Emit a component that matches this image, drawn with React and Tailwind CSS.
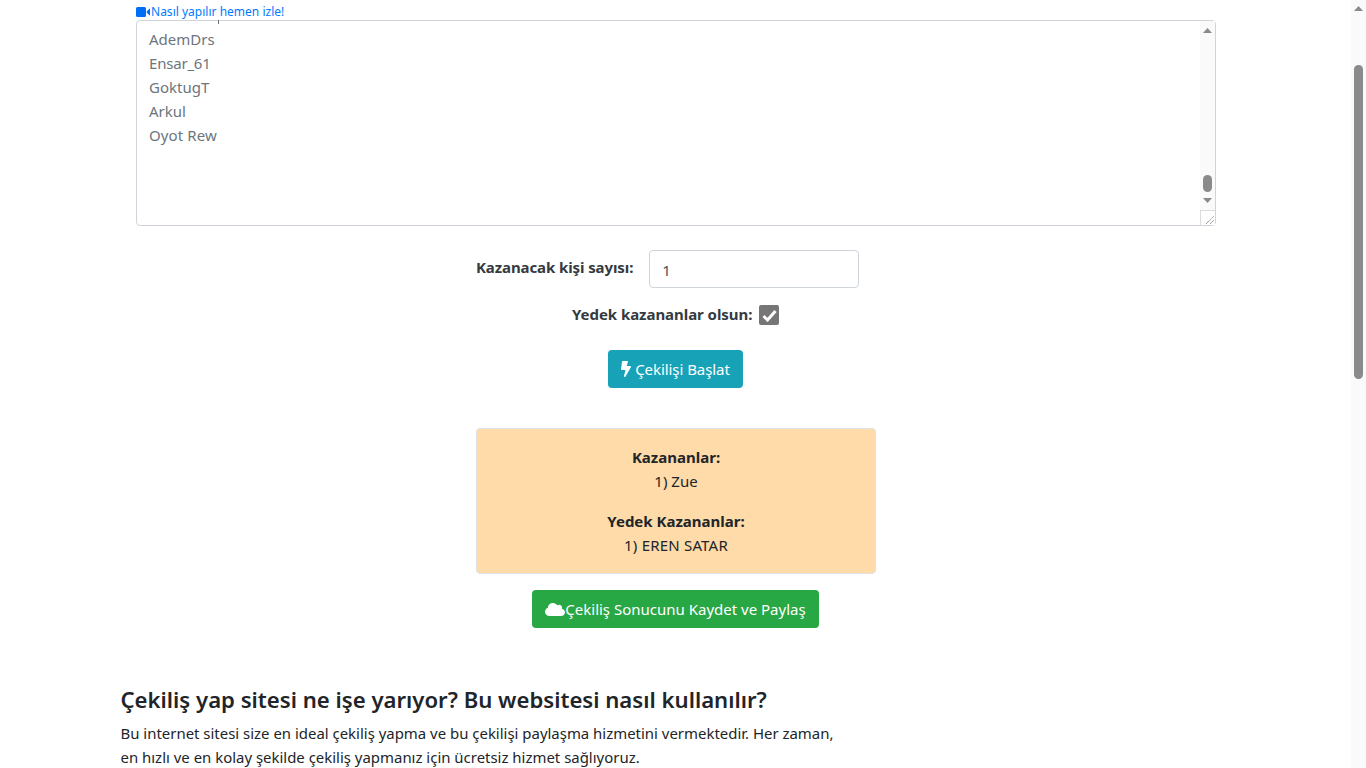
import React from "react";

function Arrow({ up, className }) {
  return (
    <svg width="9" height="5" viewBox="0 0 9 5" className={className}>
      <path d={up ? "M4.5 0L9 5H0z" : "M0 0h9L4.5 5z"} fill="#8a8a8a" />
    </svg>
  );
}

function Video() {
  return (
    <svg width="14" height="10" viewBox="0 0 14 10" className="shrink-0">
      <rect x="0" y="0" width="10" height="10" rx="1.500" fill="#006ef5" />
      <path d="M10.800 4.200L14 1.200V8.800L10.800 5.800z" fill="#006ef5" />
    </svg>
  );
}

function Bolt() {
  return (
    <svg width="10" height="16" viewBox="0 0 320 512" className="shrink-0">
      <path fill="#fff" d="M296 160H180.600l42.600-129.800C227.200 15 215.700 0 200 0H56C44 0 33.800 8.900 32.200 20.800l-32 240C-1.700 275.200 9.500 288 24 288h118.700L96.600 482.500c-3.600 15.200 8 29.500 23.300 29.500 8.400 0 16.400-4.400 20.800-12l176-304c9.300-15.900-2.200-36-20.700-36z" />
    </svg>
  );
}

function Cloud() {
  return (
    <svg width="20" height="15" viewBox="0 0 640 512" className="shrink-0" preserveAspectRatio="none">
      <path fill="#fff" d="M537.600 226.600c4.100-10.700 6.400-22.400 6.400-34.600 0-53-43-96-96-96-19.700 0-38.100 6-53.300 16.200C367 64.200 315.300 32 256 32c-88.400 0-160 71.600-160 160 0 2.700.1 5.400.2 8.100C40.200 219.800 0 273.200 0 336c0 79.500 64.500 144 144 144h368c70.700 0 128-57.300 128-128 0-61.900-44-113.600-102.400-125.400z" />
    </svg>
  );
}

export default function App() {
  return (
    <div className="flex h-screen overflow-hidden bg-white font-['Noto_Sans','Open_Sans',sans-serif] text-[15px] leading-6 text-[#212529]">
      <main className="min-w-0 flex-1 overflow-hidden">
        <div className="ml-[136px] w-[1080px] pt-[4px]">
          <a className="flex h-[16px] items-center gap-px pb-[1px] text-[12px] leading-[15px] text-[#007bff]">
            <Video />
            <span className="tracking-[0.01px]">Nasıl yapılır hemen izle!</span>
          </a>
          <div className="relative flex h-[206px] rounded-[4px] border border-[#ced4da]">
            <span className="absolute left-[81px] top-[-1px] h-[4px] w-px bg-[#6c757d]" />
            <div className="flex-1 pl-[12px] pt-[6px] text-[#6c757d]">
              <div>AdemDrs</div>
              <div className="tracking-[-0.2px]">Ensar_61</div>
              <div>GoktugT</div>
              <div>Arkul</div>
              <div className="tracking-[0.1px]">Oyot Rew</div>
            </div>
            <div className="flex w-[15px] flex-col items-center bg-[#fafafa]">
              <Arrow up className="mt-[7px]" />
              <div className="mt-[142px] h-[17px] w-[9px] rounded-full bg-[#8a8a8a]" />
              <Arrow className="mt-[6px]" />
              <div className="relative mt-auto h-[15px] w-[15px] border-l border-t border-[#dcdcdc] bg-white">
                <svg width="8" height="8" viewBox="0 0 8 8" className="absolute bottom-[1px] right-[1px]">
                  <path d="M0 8L8 0M4 8L8 4" stroke="#555" strokeWidth="0.8" strokeDasharray="1 0.6" />
                </svg>
              </div>
            </div>
          </div>
        </div>

        <div className="ml-[476px] w-[400px]">
          <div className="mt-6 flex items-start">
            <label className="mt-[5px] font-bold tracking-[-0.1px] text-[#343a40]">Kazanacak kişi sayısı:</label>
            <div className="ml-[16px] flex h-[38px] w-[210px] items-center rounded-[4px] border border-[#ced4da] pl-[12px] pt-[2px] text-[#495057]">1</div>
          </div>
          <div className="mt-[14px] flex h-[26px] items-start">
            <label className="ml-[96px] w-[180px] whitespace-nowrap font-bold text-[#343a40] tracking-[-0.05px]">Yedek kazananlar olsun:</label>
            <span className="ml-[7px] mt-[3px] flex h-5 w-5 items-center justify-center rounded-[2px] bg-[#767676]">
              <svg width="15" height="13" viewBox="0 0 15 13"><path d="M1.500 7L5.500 11L13.500 2" fill="none" stroke="#fff" strokeWidth="3" /></svg>
            </span>
          </div>
          <div className="mt-[22px] flex">
            <button className="ml-[132px] flex h-[38px] w-[135px] items-center justify-center gap-1 rounded-[4px] bg-[#17a2b8] text-white">
              <Bolt />
              <span className="tracking-[-0.06px]">Çekilişi Başlat</span>
            </button>
          </div>
          <div className="mt-10 flex h-[146px] flex-col items-center rounded-[4px] border border-[#dee2e6] bg-[#fedba8] pt-4 text-[#212529]">
            <div className="font-bold">Kazananlar:</div>
            <div>1) Zue</div>
            <div className="mt-4 font-bold">Yedek Kazananlar:</div>
            <div className="tracking-[0.2px]">1) EREN SATAR</div>
          </div>
          <div className="mt-4 flex">
            <button className="ml-[56px] flex h-[38px] w-[287px] items-center justify-center rounded-[4px] bg-[#28a745] text-white">
              <Cloud />
              <span>Çekiliş Sonucunu Kaydet ve Paylaş</span>
            </button>
          </div>
        </div>

        <section className="ml-[120.5px] mt-[54px] w-[730px]">
          <h2 className="text-[22.13px] font-semibold leading-[34px] text-[#212529]">Çekiliş yap sitesi ne işe yarıyor? Bu websitesi nasıl kullanılır?</h2>
          <p className="mt-[5px] text-[14.95px] leading-6 text-[#212529]">Bu internet sitesi size en ideal çekiliş yapma ve bu çekilişi paylaşma hizmetini vermektedir. Her zaman, en hızlı ve en kolay şekilde çekiliş yapmanız için ücretsiz hizmet sağlıyoruz.</p>
        </section>
      </main>
      <aside className="flex w-[15px] shrink-0 flex-col items-center bg-[#fafafa]">
        <Arrow up className="mt-[6px]" />
        <div className="mt-[54px] h-[314px] w-[9px] rounded-full bg-[#8a8a8a]" />
      </aside>
    </div>
  );
}
